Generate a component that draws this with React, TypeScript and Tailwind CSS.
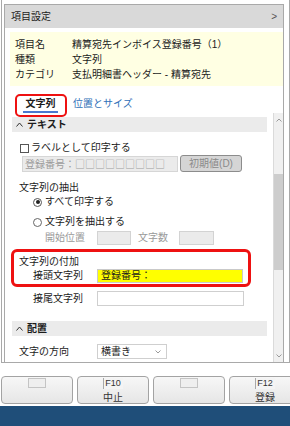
import React from "react";

function Caret({ up = true }: { up?: boolean }) {
  return (
    <svg width="7" height="5" viewBox="0 0 7 5" className="shrink-0">
      {up ? (
        <path d="M0.5 4.5 L3.5 1 L6.5 4.5" fill="none" stroke="#333" strokeWidth="1" />
      ) : (
        <path d="M0.5 0.5 L3.5 4 L6.5 0.5" fill="none" stroke="#333" strokeWidth="1" />
      )}
    </svg>
  );
}

function SmallChevron({ up = true }: { up?: boolean }) {
  return (
    <svg width="6" height="4" viewBox="0 0 6 4">
      {up ? (
        <path d="M0.5 3.5 L3 1 L5.5 3.5" fill="none" stroke="#9a9a9a" strokeWidth="1" />
      ) : (
        <path d="M0.5 0.5 L3 3 L5.5 0.5" fill="none" stroke="#9a9a9a" strokeWidth="1" />
      )}
    </svg>
  );
}

function SectionBand({ label }: { label: string }) {
  return (
    <div className="ml-[7px] mr-[6px] h-[15px] bg-[#ebebeb] flex items-center pl-[4px] gap-[4px]">
      <Caret />
      <span className="font-bold">{label}</span>
    </div>
  );
}

function FnButton({ top, bottom }: { top?: string; bottom?: string }) {
  return (
    <div className="w-[72px] shrink-0 h-[28px] rounded-[4px] border border-[#a3a3a3] bg-gradient-to-b from-[#f7f7f7] to-[#e6e6e6] flex flex-col items-center pt-[1px]">
      {top ? (
        <>
          <div className="h-[11px] flex items-center border-l border-[#a8a8a8] bg-[#f4f4f4] pl-[1px] pr-[2px] text-[9px] text-[#333]">
            {top}
          </div>
          <div className="mt-[4px] text-[10px] text-[#333] leading-none">{bottom}</div>
        </>
      ) : (
        <div className="w-[18px] h-[10px] border border-[#c4c4c4] bg-[#efefef]" />
      )}
    </div>
  );
}

export default function App() {
  return (
    <div className="w-[290px] h-[426px] bg-white flex flex-col overflow-hidden text-[10px] leading-none text-[#1c1c1c] font-['Liberation_Sans','Noto_Sans_CJK_JP',sans-serif]">
      {/* frame */}
      <div className="ml-[1px] w-[289px] h-[363px] shrink-0 border-l border-r border-b border-[#a9a9a9] flex flex-col">
        <div className="ml-[2px] mt-[4px] w-[280px] flex-1 min-h-0 border-t border-l border-r border-[#a9a9a9] flex flex-col">
          {/* header */}
          <div className="h-[23px] shrink-0 bg-[#d9d9d9] flex items-center justify-between pl-[6px] pr-[6px]">
            <span>項目設定</span>
            <span className="text-[#555]">&gt;</span>
          </div>
          {/* info */}
          <div className="mt-[4px] ml-[5px] h-[54px] shrink-0 bg-[#ffffe3] pl-[5px] pt-[5px] flex flex-col">
            <div className="h-[15px] flex items-center">
              <span className="w-[57px]">項目名</span>
              <span>精算宛先インボイス登録番号（1）</span>
            </div>
            <div className="h-[15px] flex items-center">
              <span className="w-[57px]">種類</span>
              <span>文字列</span>
            </div>
            <div className="h-[15px] flex items-center">
              <span className="w-[57px]">カテゴリ</span>
              <span>支払明細書ヘッダー - 精算宛先</span>
            </div>
          </div>
          {/* tabs */}
          <div className="relative h-[27px] shrink-0 flex">
            <div className="ml-[18px] w-[35px] flex flex-col items-center">
              <div className="pt-[13px] font-bold">文字列</div>
              <div className="flex-1" />
              <div className="w-full h-[2px] bg-[#4a78d0]" />
            </div>
            <div className="ml-[15px] pt-[13px] text-[#2f6fb8]">位置とサイズ</div>
            <div className="absolute left-[10px] top-[8px] w-[52px] h-[23px] border-[2.5px] border-[#ee1111] rounded-[5px]" />
          </div>
          {/* scroll region */}
          <div className="flex-1 min-h-0 flex">
            <div className="relative flex-1 min-w-0 overflow-hidden flex flex-col">
              <div className="mt-[4px]">
                <SectionBand label="テキスト" />
              </div>
              <div className="mt-[9px] h-[14px] flex items-center pl-[15px]">
                <div className="w-[9px] h-[9px] border border-[#555] bg-white" />
                <span className="ml-[2px]">ラベルとして印字する</span>
              </div>
              <div className="h-[17px] flex items-center pl-[17px]">
                <div className="w-[156px] h-[16px] bg-[#ebebeb] border border-[#d6d6d6] flex items-center pl-[2px] text-[#9c9c9c] overflow-hidden whitespace-nowrap font-['Noto_Sans_CJK_JP',sans-serif]">
                  登録番号：□□□□□□□□□
                </div>
                <div className="ml-[2px] w-[62px] h-[17px] rounded-[3px] border border-[#8c8c8c] bg-[#d5d5d5] flex items-center justify-center text-[#8a8a8a]">
                  初期値(D)
                </div>
              </div>
              <div className="mt-[9px] h-[14px] flex items-center pl-[14px]">文字列の抽出</div>
              <div className="h-[14px] flex items-center pl-[28px]">
                <div className="w-[9px] h-[9px] rounded-full border border-[#555] flex items-center justify-center">
                  <div className="w-[4px] h-[4px] rounded-full bg-[#222]" />
                </div>
                <span className="ml-[3px]">すべて印字する</span>
              </div>
              <div className="mt-[6px] h-[14px] flex items-center pl-[28px]">
                <div className="w-[9px] h-[9px] rounded-full border border-[#666]" />
                <span className="ml-[3px]">文字列を抽出する</span>
              </div>
              <div className="mt-[2px] h-[14px] flex items-center pl-[40px] text-[#9a9a9a]">
                <span className="w-[52px]">開始位置</span>
                <div className="w-[34px] h-[14px] bg-[#ebebeb] border border-[#d3d3d3]" />
                <span className="ml-[7px] w-[41px]">文字数</span>
                <div className="w-[35px] h-[14px] bg-[#ebebeb] border border-[#d3d3d3]" />
              </div>
              <div className="mt-[10px] h-[14px] flex items-center pl-[14px]">文字列の付加</div>
              <div className="h-[14px] flex items-center pl-[28px]">
                <span className="w-[64px]">接頭文字列</span>
                <div className="w-[146px] h-[14px] bg-[#ffff00] border border-[#c9c9c9] flex items-center pl-[3px]">
                  登録番号：
                </div>
              </div>
              <div className="mt-[8px] h-[15px] flex items-center pl-[28px]">
                <span className="w-[64px]">接尾文字列</span>
                <div className="w-[147px] h-[15px] bg-white border border-[#cfcfcf]" />
              </div>
              <div className="mt-[15px]">
                <SectionBand label="配置" />
              </div>
              <div className="mt-[8px] h-[15px] flex items-center pl-[14px]">
                <span className="w-[78px]">文字の方向</span>
                <div className="w-[70px] h-[15px] bg-white border border-[#cfcfcf] flex items-center justify-between pl-[3px] pr-[5px]">
                  <span>横書き</span>
                  <SmallChevron up={false} />
                </div>
              </div>
              {/* annotation */}
              <div className="absolute left-[6px] top-[136px] w-[240px] h-[38px] border-[3px] border-[#ee1111] rounded-[6px]" />
            </div>
            {/* scrollbar */}
            <div className="w-[10px] shrink-0 bg-[#f0f0f0] border-l border-[#dadada] flex flex-col items-center">
              <div className="h-[13px] flex items-center justify-center">
                <SmallChevron />
              </div>
              <div className="h-[48px]" />
              <div className="w-full h-[96px] bg-[#cdcdcd]" />
              <div className="flex-1" />
              <div className="h-[12px] flex items-center justify-center">
                <SmallChevron up={false} />
              </div>
            </div>
          </div>
        </div>
      </div>
      {/* buttons */}
      <div className="mt-[13px] h-[28px] shrink-0 flex gap-[4px] pl-[1px]">
        <FnButton />
        <FnButton top="F10" bottom="中止" />
        <FnButton />
        <FnButton top="F12" bottom="登録" />
      </div>
      <div className="mt-[2px] flex-1 bg-[#1f4e79]" />
    </div>
  );
}
